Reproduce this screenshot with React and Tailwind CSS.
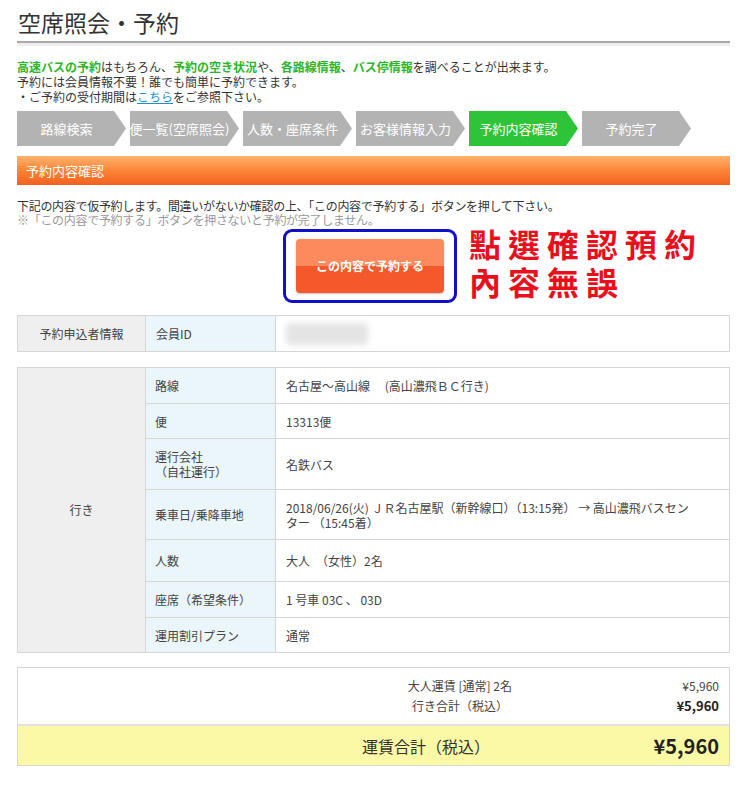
import React from "react";

const steps = [
  { label: "路線検索", active: false },
  { label: "便一覧(空席照会)", active: false },
  { label: "人数・座席条件", active: false },
  { label: "お客様情報入力", active: false },
  { label: "予約内容確認", active: true },
  { label: "予約完了", active: false },
];

const rows = [
  { k: "路線", v: "名古屋～高山線　 (高山濃飛ＢＣ行き)", h: "h-[36px]" },
  { k: "便", v: "13313便", h: "h-[35px]" },
  { k: <>運行会社<br />（自社運行）</>, v: "名鉄バス", h: "h-[51px]" },
  {
    k: "乗車日/乗降車地",
    v: <>2018/06/26(火) ＪＲ名古屋駅（新幹線口）（13:15発） → 高山濃飛バスセン<br />ター （15:45着）</>,
    h: "h-[50px]",
  },
  { k: "人数", v: "大人　（女性）2名", h: "h-[42px]" },
  { k: "座席（希望条件）", v: "1 号車 03C 、 03D", h: "h-[36px]" },
  { k: "運用割引プラン", v: "通常", h: "h-[35px]" },
];

export default function App() {
  return (
    <div
      className="w-[750px] h-[787px] bg-white text-[#333] overflow-hidden"
      style={{ fontFamily: '"Noto Sans CJK JP", "Noto Sans", sans-serif' }}
    >
      <div className="pl-[17px] w-[730px]">
        {/* Title */}
        <div className="pt-[6px] pb-[3px] border-b-2 border-[#a9a9a9]">
          <h1 className="text-[23px] leading-[32px] pl-[1px] text-[#333]">空席照会・予約</h1>
        </div>
        <div className="h-[3px] bg-[#eeeeee]" />

        {/* Intro */}
        <div className="mt-[13px] text-[12px] leading-[15px] text-[#333]">
          <p>
            <span className="text-[#2db52d] font-bold">高速バスの予約</span>はもちろん、
            <span className="text-[#2db52d] font-bold">予約の空き状況</span>や、
            <span className="text-[#2db52d] font-bold">各路線情報</span>、
            <span className="text-[#2db52d] font-bold">バス停情報</span>を調べることが出来ます。
          </p>
          <p>予約には会員情報不要！誰でも簡単に予約できます。</p>
          <p>
            ・ご予約の受付期間は<span className="text-[#1a8fd8] underline">こちら</span>をご参照下さい。
          </p>
        </div>

        {/* Steps */}
        <div className="mt-[7px] flex gap-[4px]">
          {steps.map((s, i) => (
            <div
              key={i}
              className={`w-[109px] h-[35px] flex items-center justify-center pr-[10px] text-[13px] text-white ${
                s.active ? "bg-[#2ec43a]" : "bg-[#b3b3b3]"
              }`}
              style={{ clipPath: "polygon(0 0, 97px 0, 109px 50%, 97px 100%, 0 100%)" }}
            >
              <span className="whitespace-nowrap">{s.label}</span>
            </div>
          ))}
        </div>

        {/* Orange header */}
        <div className="mt-[10px] h-[29px] bg-gradient-to-b from-[#ffb36b] via-[#fb8437] to-[#f2601c] flex items-center pl-[9px] text-white text-[13px]">
          予約内容確認
        </div>

        {/* Notice */}
        <div className="mt-[14px] text-[12px] leading-[14px] tracking-[-0.3px]">
          <p className="text-[#333]">下記の内容で仮予約します。間違いがないか確認の上、「この内容で予約する」ボタンを押して下さい。</p>
          <p className="text-[#999]">※「この内容で予約する」ボタンを押さないと予約が完了しません。</p>
        </div>

        {/* Button + annotation */}
        <div className="flex items-start h-[76px]">
          <div className="ml-[266px] mt-[2px] w-[174px] h-[74px] border-[3px] border-[#1010c8] rounded-[9px] flex items-center justify-center">
            <div className="w-[148px] h-[54px] rounded-[4px] overflow-hidden flex flex-col relative shadow-[0_1px_2px_rgba(0,0,0,0.25)]">
              <div className="h-1/2 bg-[#fd8a5c]" />
              <div className="h-1/2 bg-[#f5582a]" />
              <span className="absolute inset-0 flex items-center justify-center text-white text-[12px] font-bold">
                この内容で予約する
              </span>
            </div>
          </div>
          <div
            className="ml-[12px] -mt-[3px] text-[#e8101c] text-[32px] leading-[38px] font-bold tracking-[7px]"
            style={{ fontFamily: '"Noto Sans CJK TC", sans-serif' }}
          >
            <div>點選確認預約</div>
            <div>內容無誤</div>
          </div>
        </div>

        {/* Table 1 */}
        <table className="mt-[12px] w-[713px] border-collapse text-[12px] text-[#444]">
          <tbody>
            <tr className="h-[36px]">
              <td className="w-[128px] bg-[#efefef] border border-[#d6d6d6] text-center">予約申込者情報</td>
              <td className="w-[130px] bg-[#eaf6fa] border border-[#d6d6d6] pl-[10px]">会員ID</td>
              <td className="border border-[#d6d6d6] pl-[10px]">
                <div className="w-[82px] h-[22px] bg-[#e4e4e4] blur-[3px] rounded" />
              </td>
            </tr>
          </tbody>
        </table>

        {/* Table 2 */}
        <table className="mt-[15px] w-[713px] border-collapse text-[12px] text-[#444]">
          <tbody>
            {rows.map((r, i) => (
              <tr key={i} className={r.h}>
                {i === 0 && (
                  <td rowSpan={rows.length} className="w-[128px] bg-[#efefef] border border-[#d6d6d6] text-center">
                    行き
                  </td>
                )}
                <td className="w-[130px] bg-[#eaf6fa] border border-[#d6d6d6] pl-[9px] leading-[15px]">{r.k}</td>
                <td className="border border-[#d6d6d6] pl-[10px] pr-[10px] leading-[15px]">{r.v}</td>
              </tr>
            ))}
          </tbody>
        </table>

        {/* Summary */}
        <div className="mt-[14px] w-[713px] border border-[#d6d6d6]">
          <div className="pt-[8px] pb-[8px] text-[12px] leading-[20px] text-[#444]">
            <div className="flex">
              <div className="w-[494px] text-right">大人運賃 [通常] 2名</div>
              <div className="flex-1 text-right pr-[10px]">¥5,960</div>
            </div>
            <div className="flex">
              <div className="w-[490px] text-right">行き合計（税込）</div>
              <div className="flex-1 text-right pr-[10px] font-bold text-[#222] text-[13px]">¥5,960</div>
            </div>
          </div>
          <div className="h-[41px] bg-[#fbf9a6] border-t-2 border-[#e2e2e2] flex items-center">
            <div className="w-[472px] text-right text-[16px] text-[#333]">運賃合計（税込）</div>
            <div className="flex-1 text-right pr-[10px] font-bold text-[20px] text-[#222]">¥5,960</div>
          </div>
        </div>
      </div>
    </div>
  );
}
